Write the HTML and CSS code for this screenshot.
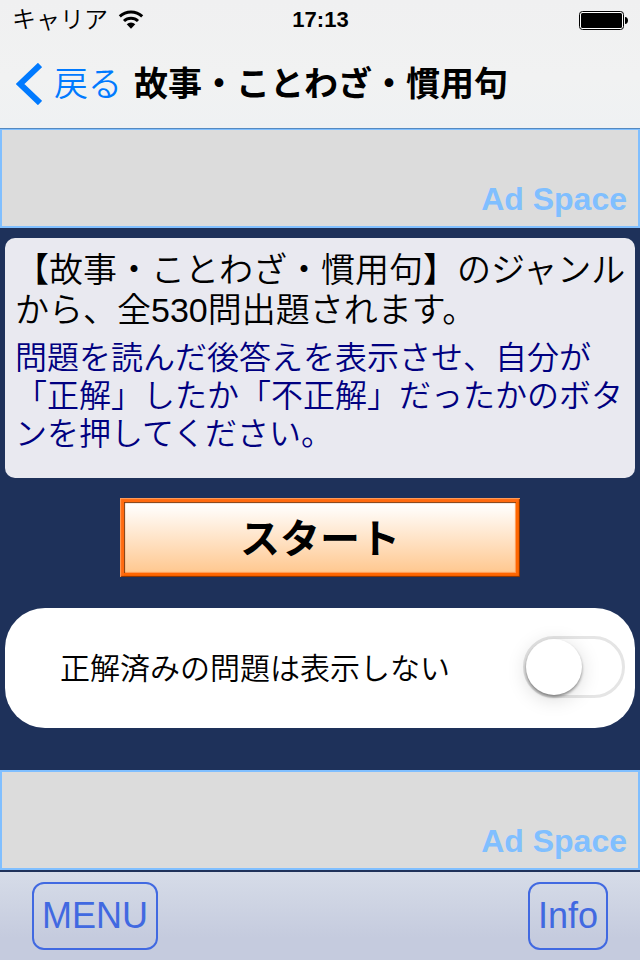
FILE: index.html
```html
<!DOCTYPE html>
<html lang="ja">
<head>
    <meta charset="UTF-8">
    <meta name="viewport" content="width=device-width, initial-scale=1.0">
    <title>故事・ことわざ・慣用句</title>
    <link rel="stylesheet" href="styles.css">
</head>
<body>

    <header class="header">
        <!-- Status bar -->
        <div class="status-bar">
            <div class="carrier">
                <span>キャリア</span>
                <svg class="wifi" width="26" height="20" viewBox="0 0 26 20" aria-hidden="true">
                    <path d="M1.8 6.4 A16.4 16.4 0 0 1 24.2 6.4" fill="none" stroke="#000" stroke-width="3"/>
                    <path d="M6 11 A10.2 10.2 0 0 1 20 11" fill="none" stroke="#000" stroke-width="3"/>
                    <path d="M8.7 14.3 A6.3 6.3 0 0 1 17.3 14.3 L13 18.8 Z"/>
                </svg>
            </div>
            <time class="clock">17:13</time>
            <svg class="battery" width="50" height="20" viewBox="0 0 50 20" aria-hidden="true">
                <rect x="0.5" y="1.5" width="44" height="18" rx="3" fill="#fff" stroke="#000"/>
                <rect x="2" y="3" width="41" height="15" rx="1.5"/>
                <path d="M46 7 C50 7 50 14 46 14 Z"/>
            </svg>
        </div>

        <!-- Navigation -->
        <nav class="nav-bar">
            <a class="back" href="#">
                <svg class="chevron" width="26" height="42" viewBox="0 0 26 42" aria-hidden="true">
                    <path d="M24 2 L4 21 L24 40" fill="none" stroke="#007aff" stroke-width="6"/>
                </svg>
                <span>戻る</span>
            </a>
            <h1 class="title">故事・ことわざ・慣用句</h1>
        </nav>
    </header>

    <div class="ad ad-top">Ad Space</div>

    <main class="content">
        <section class="description">
            <p class="genre">【故事・ことわざ・慣用句】のジャンルから、全530問出題されます。</p>
            <p class="guide">問題を読んだ後答えを表示させ、自分が「正解」したか「不正解」だったかのボタンを押してください。</p>
        </section>

        <button class="start" type="button">スタート</button>

        <div class="setting">
            <label for="hide-solved">正解済みの問題は表示しない</label>
            <input class="switch" type="checkbox" role="switch" id="hide-solved">
        </div>
    </main>

    <div class="ad ad-bottom">Ad Space</div>

    <!-- Bottom toolbar -->
    <footer class="toolbar">
        <button class="tool" type="button">MENU</button>
        <button class="tool" type="button">Info</button>
    </footer>

</body>
</html>
```
FILE: styles.css
```css
* {
    box-sizing: border-box;
}

body {
    margin: 0;
    min-height: 100vh;
    display: flex;
    flex-direction: column;
    background: #1e315a;
    color: #000;
    font-family: "Liberation Sans", "Noto Sans CJK JP", sans-serif;
}

button {
    font-family: inherit;
}

/* Header */
.header {
    background: linear-gradient(#f0f0f1, #f1f2f2 60%, #eff1f3);
    border-bottom: 1px solid #5589c0;
}

.status-bar {
    display: grid;
    grid-template-columns: 1fr auto 1fr;
    align-items: center;
    height: 40px;
    padding: 0 11px 0 12px;
}

.carrier {
    display: flex;
    align-items: center;
    gap: 10px;
    font-size: 24px;
    font-weight: 350;
    line-height: 40px;
}

.clock {
    font-size: 22px;
    font-weight: bold;
}

.battery {
    justify-self: end;
}

.nav-bar {
    display: flex;
    align-items: center;
    gap: 12px;
    height: 88px;
    padding: 0 16px;
    line-height: 88px;
}

.back {
    display: flex;
    align-items: center;
    gap: 12px;
    color: #007aff;
    font-size: 34px;
    font-weight: 350;
    text-decoration: none;
}

.title {
    margin: 0;
    font-size: 34px;
    font-weight: bold;
}

/* Ad banners */
.ad {
    display: flex;
    justify-content: flex-end;
    align-items: flex-end;
    height: 100px;
    padding: 8px 11px;
    background: #dcdcdc;
    border: 2px solid #80bfff;
    color: #80bfff;
    font-size: 32px;
    font-weight: bold;
    line-height: 38px;
}

.ad-top {
    height: 99px;
    border-top-width: 1px;
}

.ad-bottom {
    margin-bottom: 2px;
}

/* Main content */
.content {
    flex: 1;
    display: flex;
    flex-direction: column;
    padding: 10px 5px;
}

.description {
    min-height: 240px;
    padding: 12px 6px 12px 10px;
    background: #e9e9f0;
    border-radius: 10px;
    font-weight: 350;
}

.description p {
    margin: 0;
}

.genre {
    font-size: 34px;
    line-height: 40px;
}

.description .guide {
    margin-top: 9px;
    color: #000080;
    font-size: 32px;
    line-height: 38px;
}

.start {
    align-self: center;
    width: 400px;
    max-width: 100%;
    height: 79px;
    margin: 20px 0 31px;
    padding: 0 0 4px;
    background: linear-gradient(#fff 8%, #ffc890 94%);
    border: 0;
    box-shadow:
        inset 1px 1px 1px #ffa060,
        inset -1px -1px 1px #803000,
        inset 4px 4px 0 #ff6a10,
        inset -4px -4px 0 #ff6600,
        inset 5px 5px 1px #803808,
        inset -5px -5px 1px #ff9850;
    color: #000;
    font-size: 40px;
    font-weight: bold;
}

.setting {
    display: flex;
    justify-content: space-between;
    align-items: center;
    min-height: 120px;
    padding: 0 10px 2px 55px;
    background: #fff;
    border-radius: 40px;
    font-size: 30px;
    font-weight: 350;
}

.setting label {
    padding-bottom: 2px;
}

.switch {
    appearance: none;
    flex: none;
    width: 102px;
    height: 62px;
    margin: 0;
    background: #fff;
    border: 3px solid #e5e5e5;
    border-radius: 31px;
}

.switch::before {
    content: "";
    display: block;
    width: 56px;
    height: 56px;
    background: #fff;
    border-radius: 50%;
    box-shadow: 0 2px 3px rgba(0, 0, 0, 0.4), 0 4px 20px rgba(0, 0, 0, 0.15);
}

.switch:checked {
    background: #4cd964;
    border-color: #4cd964;
}

.switch:checked::before {
    margin-left: auto;
}

/* Toolbar */
.toolbar {
    display: flex;
    justify-content: space-between;
    align-items: center;
    height: 88px;
    padding: 0 32px;
    background: linear-gradient(#d6dce8, #c5cbde 75%);
}

.tool {
    height: 68px;
    padding: 0 8px;
    background: none;
    border: 2px solid #4169e1;
    border-radius: 12px;
    color: #4169e1;
    font-size: 36px;
}
```
